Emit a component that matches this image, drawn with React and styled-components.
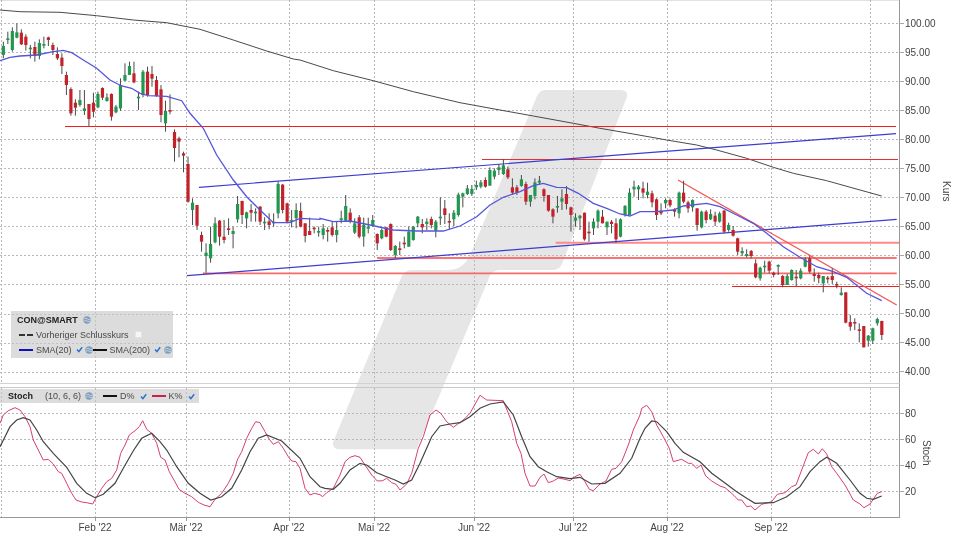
import React from 'react';
import styled, { createGlobalStyle } from 'styled-components';

const GlobalStyle = createGlobalStyle`
  html, body { margin: 0; padding: 0; background: #fff; }
  body { font-family: "Liberation Sans", Arial, sans-serif; }
`;

const Page = styled.div`
  position: relative;
  width: 960px;
  height: 540px;
  overflow: hidden;
  background: #fff;
  color: #444;
  font-size: 10px;
  filter: blur(0.35px);
`;

const Watermark = styled.svg`
  position: absolute;
  left: 0;
  top: 0;
`;

const Pane = styled.div`
  position: relative;
  display: flex;
  height: ${(p) => p.$height}px;
`;

const Plot = styled.svg`
  display: block;
  flex: none;
`;

const Axis = styled.div`
  display: flex;
  flex: 1;
  border-left: 1px solid #999;
`;

const TickColumn = styled.div`
  flex: none;
  width: ${(p) => p.$width}px;
  padding-top: ${(p) => p.$top}px;
`;

const Tick = styled.div`
  position: relative;
  display: flex;
  align-items: center;
  height: ${(p) => p.$step}px;
  padding-left: 5px;
  &::before {
    content: '';
    position: absolute;
    left: 0;
    width: 4px;
    height: 1px;
    background: #aaa;
  }
`;

const AxisTitle = styled.div`
  align-self: center;
  writing-mode: vertical-rl;
`;

const Separator = styled.div`
  box-sizing: border-box;
  position: relative;
  width: 900px;
  height: 5px;
  border-top: 1px solid #d2d2d2;
  border-bottom: 1px solid #c8c8c8;
  border-right: 1px solid #999;
`;

const DateAxis = styled.svg`
  display: block;
  position: relative;
  border-top: 1px solid #999;
  width: 900px;
  height: 22px;
`;

const Legend = styled.div`
  position: absolute;
  left: ${(p) => p.$left}px;
  top: ${(p) => p.$top}px;
  box-sizing: border-box;
  width: ${(p) => p.$width}px;
  padding: ${(p) => p.$padding};
  background: rgba(198, 198, 198, 0.62);
`;

const LegendRow = styled.div`
  display: flex;
  align-items: center;
  height: ${(p) => p.$height || 15}px;
  font-size: 9px;
  color: #4a4a4a;
  white-space: nowrap;
`;

const LegendName = styled.span`
  font-weight: bold;
  color: #222;
  font-size: 9px;
  margin-right: ${(p) => p.$gap || 0}px;
`;

const LineKey = styled.span`
  flex: none;
  width: 14px;
  height: 2px;
  margin: ${(p) => p.$margin || '0 3px 0 2px'};
  background: ${(p) => p.$color};
`;

const DashKey = styled(LineKey)`
  background: linear-gradient(to right, ${(p) => p.$color} 6px, transparent 6px 8px, ${(p) => p.$color} 8px);
`;

const EmptyBox = styled.span`
  flex: none;
  width: 5px;
  height: 5px;
  margin-left: 6px;
  background: #f6f6f6;
  border: 1px solid #e4e4e4;
`;

const IconSvg = styled.svg`
  flex: none;
  margin-left: ${(p) => p.$left}px;
`;

const Check = ({ left = 4 }) => (
  <IconSvg $left={left} width="7" height="7" viewBox="0 0 7 7">
    <path d="M1 3.6 L2.9 5.6 L6.2 1.3" fill="none" stroke="#2b6fd1" strokeWidth="1.5" />
  </IconSvg>
);

const Globe = ({ left = 3 }) => (
  <IconSvg $left={left} width="8" height="8" viewBox="0 0 8 8">
    <circle cx="4" cy="4" r="3.7" fill="#7f9dbd" />
    <path d="M1.2 3 Q3 1.6 4.5 3 T7 3.4 M1 5.2 Q3 4 4.5 5.2 T7 5.2" fill="none" stroke="#c9d8e6" strokeWidth="0.9" />
  </IconSvg>
);

const PRICE_TICKS = ['100.00', '95.00', '90.00', '85.00', '80.00', '75.00', '70.00', '65.00', '60.00', '55.00', '50.00', '45.00', '40.00'];
const STOCH_TICKS = ['80', '60', '40', '20'];
const MONTHS = [["Feb '22", 95], ["M\u00e4r '22", 186], ["Apr '22", 289], ["Mai '22", 374], ["Jun '22", 474], ["Jul '22", 573], ["Aug '22", 667], ["Sep '22", 771]];
const GRID_X = [1, 95, 186, 289, 374, 474, 573, 667, 771, 870];

// points are read at 3x from crops, so (ox, oy) + value / 3
const pts = (ox, oy, list) => list.map(([x, y]) => [ox + x / 3, oy + y / 3]);
const toLine = (list) => list.map(([x, y]) => `${x.toFixed(1)},${y.toFixed(1)}`).join(' ');

const SMA20 = [
  ...pts(0, 0, [[0, 182], [30, 172], [60, 168], [110, 165], [160, 155], [190, 151], [215, 158], [250, 180], [290, 205], [330, 240], [365, 258], [395, 265], [420, 280], [445, 287], [500, 289], [545, 302], [570, 340], [610, 385], [650, 465], [700, 540]]),
  ...pts(0, 180, [[740, 50], [780, 90], [820, 128], [870, 128], [900, 115], [960, 118]]),
  ...pts(320, 120, [[0, 295], [40, 305], [90, 303], [150, 315], [220, 330], [290, 333], [370, 333], [420, 318], [470, 290], [510, 255], [550, 232], [600, 215], [640, 197], [670, 190], [710, 202], [740, 203], [775, 220], [820, 250], [860, 265], [900, 282], [930, 288], [960, 275]]),
  ...pts(640, 170, [[50, 125], [100, 120], [130, 108], [200, 100], [240, 110], [290, 135], [340, 160], [380, 190], [430, 230], [480, 262], [530, 290], [580, 305], [620, 322], [680, 370], [725, 392]]),
];

const SMA200 = [
  ...pts(0, 0, [[0, 30], [60, 35], [180, 37], [290, 47], [400, 60], [500, 68], [600, 88], [700, 120], [800, 153], [880, 177]]),
  ...pts(300, 40, [[0, 60], [100, 92], [220, 122], [340, 155], [480, 188], [600, 210], [700, 228], [820, 250], [900, 265]]),
  ...pts(600, 110, [[0, 55], [100, 72], [200, 90], [290, 105], [350, 120], [440, 145], [520, 172], [580, 190], [680, 212], [780, 240], [845, 258]]),
];

const STOCH_K = [
  ...pts(0, 0, [[0, 130], [10, 105], [25, 92], [45, 83], [60, 90], [75, 110], [90, 140], [100, 180], [115, 210], [130, 240], [145, 238], [160, 252], [175, 275], [185, 280], [200, 310], [215, 340], [228, 360], [245, 366], [260, 368], [278, 372], [290, 350], [305, 325], [320, 305], [335, 295], [350, 270], [362, 220], [375, 195], [388, 165], [405, 152], [418, 140], [428, 122], [440, 148], [455, 160], [470, 190], [482, 232], [495, 240], [508, 275], [522, 300], [537, 328], [555, 340], [575, 350], [595, 367], [612, 375], [630, 380], [645, 358], [665, 340], [685, 310], [700, 280], [712, 240], [725, 215], [740, 175], [755, 145], [767, 125], [780, 128], [795, 155], [808, 178], [820, 193], [835, 185], [850, 205], [865, 230], [875, 243], [888, 245], [900, 265], [915, 325], [930, 345], [943, 340]]),
  ...pts(320, 0, [[0, 344], [8, 350], [20, 338], [40, 325], [60, 285], [75, 245], [90, 232], [105, 227], [120, 232], [135, 255], [155, 285], [172, 303], [188, 302], [200, 295], [215, 308], [228, 313], [240, 330], [260, 312], [275, 280], [295, 205], [310, 170], [330, 105], [348, 90], [362, 100], [380, 125], [400, 142], [430, 120], [450, 100], [480, 46], [500, 60], [550, 62], [575, 125], [590, 190], [603, 220], [615, 280], [630, 318], [645, 318], [660, 292], [672, 282], [685, 308], [700, 303], [715, 294], [735, 298], [750, 302], [765, 290], [780, 283], [795, 305], [808, 328], [820, 332], [840, 312], [858, 303], [875, 268], [888, 265], [905, 245], [925, 195], [940, 150]]),
  ...pts(640, 0, [[0, 105], [5, 85], [20, 76], [35, 95], [50, 135], [70, 170], [88, 205], [100, 245], [125, 238], [145, 250], [155, 250], [170, 265], [183, 255], [197, 288], [215, 303], [240, 318], [255, 323], [275, 340], [295, 360], [305, 360], [320, 380], [332, 378], [345, 390], [365, 373], [395, 365], [412, 343], [435, 338], [455, 320], [468, 315], [485, 270], [505, 218], [520, 208], [535, 222], [547, 206], [560, 222], [575, 260], [590, 280], [615, 315], [640, 360], [660, 372], [672, 383], [690, 372], [712, 340], [725, 335]]),
];

const STOCH_D = [
  ...pts(0, 0, [[0, 200], [15, 170], [30, 140], [50, 120], [70, 113], [90, 120], [110, 150], [130, 185], [160, 220], [200, 262], [230, 310], [260, 340], [285, 353], [310, 343], [345, 310], [370, 265], [400, 212], [425, 175], [455, 160], [480, 185], [500, 210], [530, 260], [565, 310], [600, 340], [632, 360], [665, 350], [695, 325], [725, 270], [750, 215], [775, 175], [800, 165], [845, 183], [900, 235], [930, 290]]),
  ...pts(320, 0, [[0, 320], [15, 325], [40, 328], [60, 310], [90, 270], [120, 250], [140, 255], [170, 278], [200, 290], [225, 300], [250, 312], [275, 300], [300, 250], [335, 170], [360, 138], [390, 132], [420, 128], [450, 110], [480, 85], [510, 72], [550, 66], [580, 105], [605, 170], [630, 230], [655, 260], [680, 275], [710, 290], [750, 296], [780, 292], [815, 312], [855, 310], [900, 280], [935, 235]]),
  ...pts(640, 0, [[0, 175], [15, 145], [35, 123], [50, 125], [80, 155], [105, 190], [130, 217], [180, 245], [215, 280], [250, 305], [290, 335], [320, 355], [345, 370], [400, 368], [440, 350], [480, 320], [510, 275], [540, 245], [560, 232], [590, 250], [630, 300], [660, 340], [680, 355], [700, 358], [725, 348]]),
];

// candles: colour, wick top, wick bottom, body top, body bottom (crop values)
const CANDLE_SEGMENTS = [
  [0, `g125,175,138,165 g95,132,115,120 g82,155,93,150 g70,115,97,113 r88,135,98,133 r103,152,110,135 g135,175,143,147 r125,185,141,168 g118,178,129,168 g110,145,132,137 r110,138,112,120 r128,165,135,150 r142,180,162,175 r160,222,173,198 r215,285,225,255 r262,347,267,340 r298,347,308,323 g270,320,300,315 g270,345,325,333 r312,378,312,357 r278,352,308,335 g275,325,282,322 r262,300,264,293 g280,305,292,303 r280,362,282,350 g315,340,320,337 g235,332,255,325 g190,243,225,242 g185,225,198,225 r185,250,220,247 g275,330,290,295 g210,292,215,285 r200,290,215,285 r198,260,222,236 r228,290,240,288 r255,367,268,345 g302,395,333,370 r283,343,330,335 r388,485,396,444 r410,472,415,425 r455,517,460,467 r470,608,492,605`],
  [180, `g55,135,68,90 r75,150,75,137 r155,215,165,185 g190,278,218,228 g140,248,192,235 g112,190,130,187 r120,197,122,170 r120,190,170,180 r115,165,145,150 g140,205,153,162 g48,128,72,118 r62,132,63,105 g95,145,97,115 r72,125,90,98 g85,125,95,100 r78,135,80,125 g112,150,125,130 r100,148,124,135 g100,140,125,130 g5,115,12,100 r12,100,14,90 r68,130,70,125 g90,142,120,125 g70,145,90,115 r68,142,93,140 r130,187,130,168 r113,165,153,165 r140,160,143,147 g140,170,153,158`],
  [120, `g312,358,325,345 r322,365,330,335 r305,350,322,345 g303,367,330,345 g272,310,295,300 g225,303,258,302 r265,310,278,305 g295,342,310,338 r285,355,292,350 g293,380,315,350 g293,340,320,326 g285,320,300,315 r340,390,342,370 g325,358,330,355 r322,352,322,350 r310,393,312,390 g375,415,378,405 r365,405,385,390 r350,385,368,373 g320,380,335,380 g318,362,320,360 g288,322,290,310 r297,340,312,322 g295,330,305,312 r290,325,297,315 g300,352,305,332 g232,315,290,295 r240,312,265,285 r280,330,303,307 g270,318,278,298 g218,290,224,285 g218,262,220,230 g195,225,205,222 g195,228,207,222 g182,210,195,202 g180,205,187,200 r172,203,180,200 g142,197,150,197 g145,178,152,170 g132,165,142,150 g118,165,136,162 r140,177,148,172 r175,225,202,218 r195,225,202,218 g165,200,178,198 r185,255,192,245 g225,260,225,245 g175,238,187,228 g168,195,182,188 r205,245,208,228 r225,275,225,272 r265,310,268,290 g228,278,258,262 g208,270,235,245 r198,268,222,252 r260,335,262,285 g280,320,293,302 g285,330,287,295 r278,362,278,358 r305,365,335,340 g295,345,305,325 g268,325,272,305 r270,310,290,310 g305,345,305,322 r300,340,305,312 r295,368,310,358 g295,352,298,350 g255,290,258,285 g205,285,218,285 g182,230,200,208 g195,240,200,208`],
  [170, `r35,85,55,68 g38,85,65,75 r62,112,70,97 r85,150,88,135 r100,135,122,130 g85,115,90,100 r85,112,90,106 r115,140,118,125 g65,145,68,130 r32,100,68,95 r92,128,97,115 g88,125,90,112 r115,182,115,165 g122,175,125,172 r120,160,125,150 g118,150,132,148 r125,168,137,155 g125,158,130,155 r120,190,122,185 g158,185,165,180 r168,200,180,197 r203,255,205,245 g232,258,243,250 g238,262,252,258 r240,265,243,258 r268,325,280,322 g290,332,293,325 g272,308,287,292 r272,310,275,302 r305,322,308,315 g283,315,285,290 r315,352,318,345 g312,345,318,345 g298,332,300,330 r300,348,320,325 g295,328,302,325 g262,292,268,290 r258,310,265,305 r295,335,312,318 r308,340,315,325 g318,367,318,340 r318,340,323,328 r295,342,318,330 r335,355,342,346 g352,377,368,375 r367,460,367,458 r435,482,456,470 r445,480,456,459 r460,517,478,482 r468,532,468,532 g495,530,497,512 g473,522,475,512 g443,467,447,460 r452,510,453,495`],
];

const CANDLES = CANDLE_SEGMENTS.flatMap(([oy, text]) =>
  text.split(' ').map((item) => {
    const [wickTop, wickBottom, bodyTop, bodyBottom] = item.slice(1).split(',').map((v) => oy + Number(v) / 3);
    return { up: item[0] === 'g', wickTop, wickBottom, bodyTop, bodyBottom };
  })
);

const Candles = () => (
  <g>
    {CANDLES.map((c, i) => {
      const x = 3.33 + 4.505 * i;
      return (
        <g key={i}>
          <line x1={x} x2={x} y1={c.wickTop} y2={c.wickBottom} stroke="#4a4a4a" strokeWidth="1" />
          <rect x={x - 1.6} y={c.bodyTop} width="3.2" height={Math.max(c.bodyBottom - c.bodyTop, 1.6)} fill={c.up ? '#22984f' : '#c4222a'} />
        </g>
      );
    })}
  </g>
);

const Grid = ({ ys, height }) => (
  <g stroke="#b8b8b8" strokeWidth="1" strokeDasharray="2 2" fill="none">
    {ys.map((y) => <line key={y} x1="0" x2="899" y1={y} y2={y} />)}
    {GRID_X.map((x) => <line key={x} x1={x + 0.5} x2={x + 0.5} y1="0" y2={height} />)}
  </g>
);

const TrendLine = ({ from, to, color, width = 1.1 }) => (
  <line x1={from[0]} y1={from[1]} x2={to[0]} y2={to[1]} stroke={color} strokeWidth={width} />
);

const PRICE_GRID = PRICE_TICKS.map((_, i) => Math.round(23 + 29.05 * i) + 0.5);
const STOCH_GRID = [25.5, 51.5, 77.5, 103.5];

const App = () => (
  <Page>
    <GlobalStyle />
    <Watermark width="960" height="540">
      <path
        d="M545 90 H620 Q629 90 626.5 98 L562 264 Q559.5 270 552 270 H500 Q492 270 489 278 L416.7 449.3 H340 Q331 449.3 333.5 441 L401 278 Q404.5 270 412 270 H448 Q463 270 470 255 L537 96 Q540 90 545 90 Z"
        fill="#e6e6e6"
      />
    </Watermark>

    <Pane $height={383}>
      <Plot width="899" height="383">
        <line x1="0" x2="899" y1="0.5" y2="0.5" stroke="#e2e2e2" />
        <Grid ys={PRICE_GRID} height={383} />
        <polyline points={toLine(SMA200)} fill="none" stroke="#4a4a4a" strokeWidth="1" />
        <TrendLine from={[65, 126.5]} to={[896, 126.5]} color="#f41c1c" width={1.2} />
        <TrendLine from={[482, 159.5]} to={[898, 159.5]} color="#e03038" width={1} />
        <TrendLine from={[555.7, 242.7]} to={[899, 242.7]} color="#ff8a8a" width={2} />
        <TrendLine from={[377, 258]} to={[896.7, 258]} color="#fb7474" width={2} />
        <TrendLine from={[203, 273.3]} to={[896.7, 273.3]} color="#f86a6a" width={1.8} />
        <TrendLine from={[732, 286.5]} to={[899, 286.5]} color="#f41c1c" width={1.2} />
        <TrendLine from={[678, 180]} to={[896.7, 305]} color="#f4534f" width={1.2} />
        <TrendLine from={[199, 187.3]} to={[896, 133.7]} color="#3c3cd0" width={1.2} />
        <TrendLine from={[187, 275.7]} to={[896.7, 219.3]} color="#3c3cd0" width={1.2} />
        <Candles />
        <polyline points={toLine(SMA20)} fill="none" stroke="#5555dc" strokeWidth="1.3" />
      </Plot>
      <Axis>
        <TickColumn $width={41} $top={8.5}>
          {PRICE_TICKS.map((t) => <Tick key={t} $step={29.05}>{t}</Tick>)}
        </TickColumn>
        <AxisTitle>Kurs</AxisTitle>
      </Axis>
      <Legend $left={11} $top={311} $width={162} $padding="1px 0 1px 6px">
        <LegendRow>
          <LegendName>CON@SMART</LegendName>
          <Globe left={5} />
        </LegendRow>
        <LegendRow>
          <DashKey $color="#333" />
          Vorheriger Schlusskurs
          <EmptyBox />
        </LegendRow>
        <LegendRow>
          <LineKey $color="#1010b8" />
          SMA(20)
          <Check left={4} />
          <Globe left={2} />
          <LineKey $color="#111" $margin="0 3px 0 0" />
          SMA(200)
          <Check left={4} />
          <Globe left={3} />
        </LegendRow>
      </Legend>
    </Pane>

    <Separator />

    <Pane $height={129}>
      <Plot width="899" height="129">
        <Grid ys={STOCH_GRID} height={129} />
        <polyline points={toLine(STOCH_K)} transform="translate(0 -8)" fill="none" stroke="#d8406a" strokeWidth="1" />
        <polyline points={toLine(STOCH_D)} transform="translate(0 -8)" fill="none" stroke="#444" strokeWidth="1.2" />
      </Plot>
      <Axis>
        <TickColumn $width={21} $top={12.5}>
          {STOCH_TICKS.map((t) => <Tick key={t} $step={26}>{t}</Tick>)}
        </TickColumn>
        <AxisTitle>Stoch</AxisTitle>
      </Axis>
      <Legend $left={0} $top={1} $width={199} $padding="0 0 0 8px">
        <LegendRow $height={14}>
          <LegendName $gap={12}>Stoch</LegendName>
          (10, 6, 6)
          <Globe left={4} />
          <LineKey $color="#111" $margin="0 3px 0 10px" />
          D%
          <Check left={5} />
          <LineKey $color="#c8204e" $margin="0 3px 0 5px" />
          K%
          <Check left={5} />
        </LegendRow>
      </Legend>
    </Pane>

    <DateAxis>
      <g fill="#444" fontSize="10" textAnchor="middle" fontFamily="Liberation Sans, Arial, sans-serif">
        {MONTHS.map(([label, x]) => (
          <g key={label}>
            <line x1={x + 0.5} x2={x + 0.5} y1="0" y2="3" stroke="#999" />
            <text x={x} y="13">{label}</text>
          </g>
        ))}
      </g>
    </DateAxis>
  </Page>
);

export default App;
